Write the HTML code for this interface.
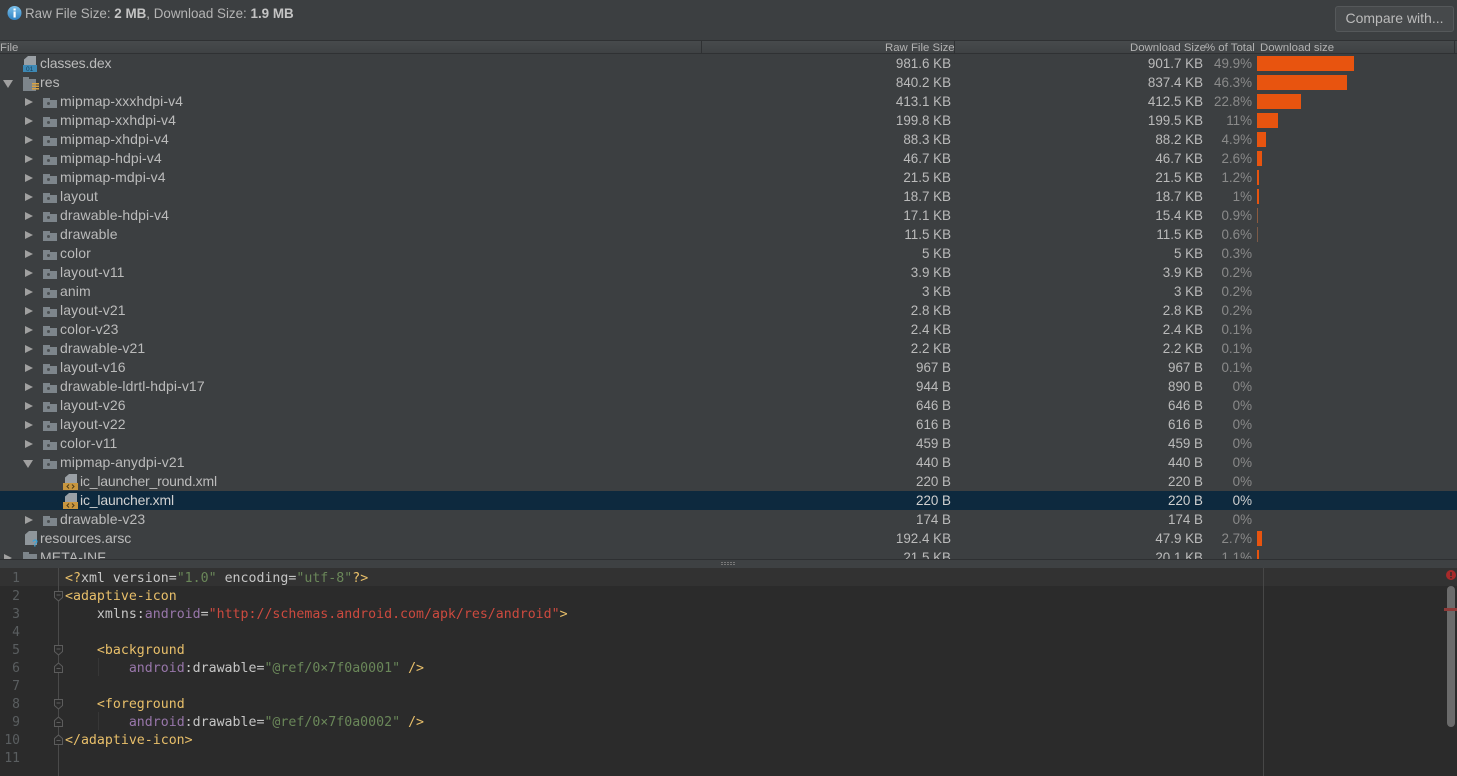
<!DOCTYPE html>
<html><head><meta charset="utf-8"><style>
html,body{margin:0;padding:0}
body{width:1457px;height:776px;overflow:hidden;background:#3c3f41;position:relative;font-family:"Liberation Sans",sans-serif;color:#bbbbbb}
div,svg,span.a{position:absolute}
#top{left:25px;top:5px;font-size:13.4px;line-height:18px;white-space:nowrap;color:#b4b4b4}
#top b{color:#c4c4c4}
#btn{left:1335px;top:6px;width:117px;height:24px;background:#46494b;border:1px solid #55585a;border-radius:3px;text-align:center;font-size:14px;line-height:22px;color:#bbb}
#head{left:0;top:40px;width:1457px;height:12px;background:linear-gradient(#474a4c,#3f4244);border-top:1px solid #2f3133;border-bottom:1px solid #2f3133;font-size:11.4px;line-height:15px;color:#b2b2b2}
#head div{top:0;white-space:nowrap}
#tree{left:0;top:54px;width:1457px;height:505px;overflow:hidden}
.r{left:0;width:1457px;height:19px;font-size:14px;line-height:19px;white-space:nowrap}
.r .n{top:0;letter-spacing:.1px}
.r .s{top:0;width:120px;left:831px;text-align:right;font-size:13.4px}
.r .d{top:0;width:120px;left:1083px;text-align:right;font-size:13.4px}
.r .p{top:0;width:50px;left:1202px;text-align:right;color:#8a8a8a;font-size:13.4px}
.r .b{left:1257px;top:2px;height:15px;background:#e8540f}
.r .t{width:0;height:0;top:6px;border-left:8px solid #a0a0a0;border-top:4.5px solid transparent;border-bottom:4.5px solid transparent;left:25px}
.r .o{width:0;height:0;top:7px;border-top:8px solid #a0a0a0;border-left:5px solid transparent;border-right:5px solid transparent;left:23px}
.r .f{left:43px;top:8px;width:14px;height:8px;background:#7d858b}
.r .f:before{content:"";position:absolute;left:0;top:-2px;width:7px;height:2px;background:#7d858b}
.r .f:after{content:"";position:absolute;left:4px;top:2px;width:3px;height:3px;border-radius:2px;background:#4a4e51}
#sep{left:0;top:559px;width:1457px;height:9px;background:#3e4143;border-top:1px solid #2e3032;box-sizing:border-box}
#ed{left:0;top:568px;width:1457px;height:208px;background:#2b2b2b}
#cl{left:0;top:0;width:1457px;height:18px;background:#323232}
#gut{left:58px;top:0;width:1px;height:208px;background:#4a4a4a}
#mg{left:1263px;top:0;width:1px;height:208px;background:#474747}
.c{left:65px;margin-top:1.500px;font-family:"DejaVu Sans Mono","Liberation Mono",monospace;font-size:13.25px;line-height:18px;white-space:pre;color:#c6c6c6}
.ln{left:0;width:20px;margin-top:1.500px;text-align:right;font-family:"DejaVu Sans Mono","Liberation Mono",monospace;font-size:13px;line-height:18px;color:#5a5e60}
.y{color:#e8bf6a}.g{color:#6a8759}.m{color:#9876aa}.u{color:#cc4a3f}
</style></head><body>
<svg style="left:7px;top:6px" width="15" height="15" viewBox="0 0 15 15"><defs><linearGradient id="ib" x1="0" y1="0" x2="0" y2="1"><stop offset="0" stop-color="#7cc0ea"/><stop offset="1" stop-color="#2f83c4"/></linearGradient></defs><circle cx="7.500" cy="7" r="7" fill="url(#ib)"/><rect x="6.500" y="5.500" width="2.200" height="6" fill="#fff"/><rect x="6.500" y="2.500" width="2.200" height="2" fill="#fff"/></svg>
<div id="top">Raw File Size: <b>2 MB</b>, Download Size: <b>1.9 MB</b></div>
<div id="btn">Compare with...</div>
<div id="head">
<div style="left:0">File</div>
<div style="left:701px;width:1px;height:12px;background:#2f3133"></div>
<div style="left:885px">Raw File Size</div>
<div style="left:954px;width:1px;height:12px;background:#2f3133"></div>
<div style="left:1130px">Download Size</div>
<div style="left:1205px">% of Total</div>
<div style="left:1260px">Download size</div>
<div style="left:1454px;width:1px;height:12px;background:#2f3133"></div>
</div>
<div id="tree">
<div class="r" style="top:0"><svg style="left:23px;top:2px" width="15" height="16" viewBox="0 0 15 16"><path d="M5 0h8v9H1V3.500z" fill="#9aa0a5"/><rect x="0" y="9" width="14" height="7" fill="#3d89b5"/><text x="3" y="15" font-size="6.500" fill="#17405c" font-family="Liberation Sans">01</text></svg><div class="n" style="left:40px;letter-spacing:-.17px">classes.dex</div><div class="s">981.6 KB</div><div class="d">901.7 KB</div><div class="p">49.9%</div><div class="b" style="width:97px"></div></div>
<div class="r" style="top:19px"><div class="o" style="left:3px"></div><svg style="left:23px;top:3px" width="17" height="15" viewBox="0 0 17 15"><path d="M0 1h6v2h7v12H0z" fill="#7d858b"/><path d="M9 7h7v1.500H9zM9 9.500h7V11H9zM9 12h7v1.500H9z" fill="#d9a343"/></svg><div class="n" style="left:40px">res</div><div class="s">840.2 KB</div><div class="d">837.4 KB</div><div class="p">46.3%</div><div class="b" style="width:90px"></div></div>
<div class="r" style="top:38px"><div class="t"></div><div class="f"></div><div class="n" style="left:60px">mipmap-xxxhdpi-v4</div><div class="s">413.1 KB</div><div class="d">412.5 KB</div><div class="p">22.8%</div><div class="b" style="width:44px"></div></div>
<div class="r" style="top:57px"><div class="t"></div><div class="f"></div><div class="n" style="left:60px">mipmap-xxhdpi-v4</div><div class="s">199.8 KB</div><div class="d">199.5 KB</div><div class="p">11%</div><div class="b" style="width:21px"></div></div>
<div class="r" style="top:76px"><div class="t"></div><div class="f"></div><div class="n" style="left:60px">mipmap-xhdpi-v4</div><div class="s">88.3 KB</div><div class="d">88.2 KB</div><div class="p">4.9%</div><div class="b" style="width:9px"></div></div>
<div class="r" style="top:95px"><div class="t"></div><div class="f"></div><div class="n" style="left:60px">mipmap-hdpi-v4</div><div class="s">46.7 KB</div><div class="d">46.7 KB</div><div class="p">2.6%</div><div class="b" style="width:5px"></div></div>
<div class="r" style="top:114px"><div class="t"></div><div class="f"></div><div class="n" style="left:60px">mipmap-mdpi-v4</div><div class="s">21.5 KB</div><div class="d">21.5 KB</div><div class="p">1.2%</div><div class="b" style="width:2px"></div></div>
<div class="r" style="top:133px"><div class="t"></div><div class="f"></div><div class="n" style="left:60px">layout</div><div class="s">18.7 KB</div><div class="d">18.7 KB</div><div class="p">1%</div><div class="b" style="width:2px"></div></div>
<div class="r" style="top:152px"><div class="t"></div><div class="f"></div><div class="n" style="left:60px">drawable-hdpi-v4</div><div class="s">17.1 KB</div><div class="d">15.4 KB</div><div class="p">0.9%</div><div class="b" style="width:1px;background:#8d5a3e"></div></div>
<div class="r" style="top:171px"><div class="t"></div><div class="f"></div><div class="n" style="left:60px">drawable</div><div class="s">11.5 KB</div><div class="d">11.5 KB</div><div class="p">0.6%</div><div class="b" style="width:1px;background:#7a5a48"></div></div>
<div class="r" style="top:190px"><div class="t"></div><div class="f"></div><div class="n" style="left:60px">color</div><div class="s">5 KB</div><div class="d">5 KB</div><div class="p">0.3%</div></div>
<div class="r" style="top:209px"><div class="t"></div><div class="f"></div><div class="n" style="left:60px">layout-v11</div><div class="s">3.9 KB</div><div class="d">3.9 KB</div><div class="p">0.2%</div></div>
<div class="r" style="top:228px"><div class="t"></div><div class="f"></div><div class="n" style="left:60px">anim</div><div class="s">3 KB</div><div class="d">3 KB</div><div class="p">0.2%</div></div>
<div class="r" style="top:247px"><div class="t"></div><div class="f"></div><div class="n" style="left:60px">layout-v21</div><div class="s">2.8 KB</div><div class="d">2.8 KB</div><div class="p">0.2%</div></div>
<div class="r" style="top:266px"><div class="t"></div><div class="f"></div><div class="n" style="left:60px">color-v23</div><div class="s">2.4 KB</div><div class="d">2.4 KB</div><div class="p">0.1%</div></div>
<div class="r" style="top:285px"><div class="t"></div><div class="f"></div><div class="n" style="left:60px">drawable-v21</div><div class="s">2.2 KB</div><div class="d">2.2 KB</div><div class="p">0.1%</div></div>
<div class="r" style="top:304px"><div class="t"></div><div class="f"></div><div class="n" style="left:60px">layout-v16</div><div class="s">967 B</div><div class="d">967 B</div><div class="p">0.1%</div></div>
<div class="r" style="top:323px"><div class="t"></div><div class="f"></div><div class="n" style="left:60px">drawable-ldrtl-hdpi-v17</div><div class="s">944 B</div><div class="d">890 B</div><div class="p">0%</div></div>
<div class="r" style="top:342px"><div class="t"></div><div class="f"></div><div class="n" style="left:60px">layout-v26</div><div class="s">646 B</div><div class="d">646 B</div><div class="p">0%</div></div>
<div class="r" style="top:361px"><div class="t"></div><div class="f"></div><div class="n" style="left:60px">layout-v22</div><div class="s">616 B</div><div class="d">616 B</div><div class="p">0%</div></div>
<div class="r" style="top:380px"><div class="t"></div><div class="f"></div><div class="n" style="left:60px">color-v11</div><div class="s">459 B</div><div class="d">459 B</div><div class="p">0%</div></div>
<div class="r" style="top:399px"><div class="o"></div><div class="f"></div><div class="n" style="left:60px">mipmap-anydpi-v21</div><div class="s">440 B</div><div class="d">440 B</div><div class="p">0%</div></div>
<div class="r" style="top:418px"><svg style="left:63px;top:2px" width="15" height="16" viewBox="0 0 15 16"><path d="M6 0h8v9H2V3.500z" fill="#9aa0a5"/><rect x="0" y="9" width="15" height="7" fill="#c8963e"/><path d="M6 10.500l-2 2 2 2M9 10.500l2 2-2 2" fill="none" stroke="#4a3a1a"/></svg><div class="n" style="left:80px;letter-spacing:-.19px">ic_launcher_round.xml</div><div class="s">220 B</div><div class="d">220 B</div><div class="p">0%</div></div>
<div class="r" style="top:437px;background:#0d293e;color:#d0d0d0"><svg style="left:63px;top:2px" width="15" height="16" viewBox="0 0 15 16"><path d="M6 0h8v9H2V3.500z" fill="#9aa0a5"/><rect x="0" y="9" width="15" height="7" fill="#c8963e"/><path d="M6 10.500l-2 2 2 2M9 10.500l2 2-2 2" fill="none" stroke="#4a3a1a"/></svg><div class="n" style="left:80px;letter-spacing:-.17px">ic_launcher.xml</div><div class="s">220 B</div><div class="d">220 B</div><div class="p" style="color:#d0d0d0">0%</div></div>
<div class="r" style="top:456px"><div class="t"></div><div class="f"></div><div class="n" style="left:60px">drawable-v23</div><div class="s">174 B</div><div class="d">174 B</div><div class="p">0%</div></div>
<div class="r" style="top:475px"><svg style="left:24px;top:2px" width="16" height="17" viewBox="0 0 16 17"><path d="M5 0h8v14H1V3.500z" fill="#8f969b"/><text x="8" y="15.500" font-size="10" font-weight="bold" fill="#3aa3d8" font-family="Liberation Sans">?</text></svg><div class="n" style="left:40px;letter-spacing:-.04px">resources.arsc</div><div class="s">192.4 KB</div><div class="d">47.9 KB</div><div class="p">2.7%</div><div class="b" style="width:5px"></div></div>
<div class="r" style="top:494px"><div class="t" style="left:4px"></div><svg style="left:23px;top:4px" width="15" height="14" viewBox="0 0 15 14"><path d="M0 0h6v2h8v12H0z" fill="#7d858b"/></svg><div class="n" style="left:40px">META-INF</div><div class="s">21.5 KB</div><div class="d">20.1 KB</div><div class="p">1.1%</div><div class="b" style="width:2px"></div></div>
</div>
<div id="sep"></div>
<svg style="left:721px;top:562px" width="14" height="3" viewBox="0 0 14 3"><path d="M0 0h2v1H0zM3 0h2v1H3zM6 0h2v1H6zM9 0h2v1H9zM12 0h2v1h-2zM0 2h2v1H0zM3 2h2v1H3zM6 2h2v1H6zM9 2h2v1H9zM12 2h2v1h-2z" fill="#777"/></svg>
<div id="ed">
<div id="cl"></div>
<div id="gut"></div>
<div id="mg"></div>
<div style="left:98px;top:90px;width:1px;height:18px;background:#373737"></div>
<div style="left:98px;top:144px;width:1px;height:18px;background:#373737"></div>
<div class="ln" style="top:0">1</div>
<div class="ln" style="top:18px">2</div>
<div class="ln" style="top:36px">3</div>
<div class="ln" style="top:54px">4</div>
<div class="ln" style="top:72px">5</div>
<div class="ln" style="top:90px">6</div>
<div class="ln" style="top:108px">7</div>
<div class="ln" style="top:126px">8</div>
<div class="ln" style="top:144px">9</div>
<div class="ln" style="top:162px">10</div>
<div class="ln" style="top:180px">11</div>
<svg style="left:53px;top:0" width="11" height="190" viewBox="0 0 11 190"><g fill="#2b2b2b" stroke="#5c5c5c"><path d="M1.500 23.500h8v6l-4 3.500-4-3.500z"/><path d="M1.500 77.500h8v6l-4 3.500-4-3.500z"/><path d="M1.500 104.500v-6l4-3.500 4 3.500v6z"/><path d="M1.500 131.500h8v6l-4 3.500-4-3.500z"/><path d="M1.500 158.500v-6l4-3.500 4 3.500v6z"/><path d="M1.500 176.500v-6l4-3.500 4 3.500v6z"/></g><path d="M3.500 27h4M3.500 81h4M3.500 100.500h4M3.500 135h4M3.500 154.500h4M3.500 172.500h4" stroke="#5c5c5c"/></svg>
<div class="c" style="top:0"><span class="y">&lt;?</span>xml version=<span class="g">"1.0"</span> encoding=<span class="g">"utf-8"</span><span class="y">?&gt;</span></div>
<div class="c" style="top:18px"><span class="y">&lt;adaptive-icon</span></div>
<div class="c" style="top:36px">    xmlns:<span class="m">android</span>=<span class="u">"http://schemas.android.com/apk/res/android"</span><span class="y">&gt;</span></div>
<div class="c" style="top:72px">    <span class="y">&lt;background</span></div>
<div class="c" style="top:90px">        <span class="m">android</span>:drawable=<span class="g">"@ref/0×7f0a0001"</span> <span class="y">/&gt;</span></div>
<div class="c" style="top:126px">    <span class="y">&lt;foreground</span></div>
<div class="c" style="top:144px">        <span class="m">android</span>:drawable=<span class="g">"@ref/0×7f0a0002"</span> <span class="y">/&gt;</span></div>
<div class="c" style="top:162px"><span class="y">&lt;/adaptive-icon&gt;</span></div>
<div style="left:1447px;top:18px;width:8px;height:141px;background:#6b6b6b;border-radius:4px"></div>
<div style="left:1444px;top:40px;width:13px;height:3px;background:#8e3a38"></div>
<svg style="left:1446px;top:2px" width="10" height="10" viewBox="0 0 10 10"><circle cx="5" cy="5" r="5" fill="#a82a2a"/><rect x="4.300" y="2" width="1.400" height="4" fill="#2b2b2b"/><rect x="4.300" y="7" width="1.400" height="1.400" fill="#2b2b2b"/></svg>
</div>
</body></html>
